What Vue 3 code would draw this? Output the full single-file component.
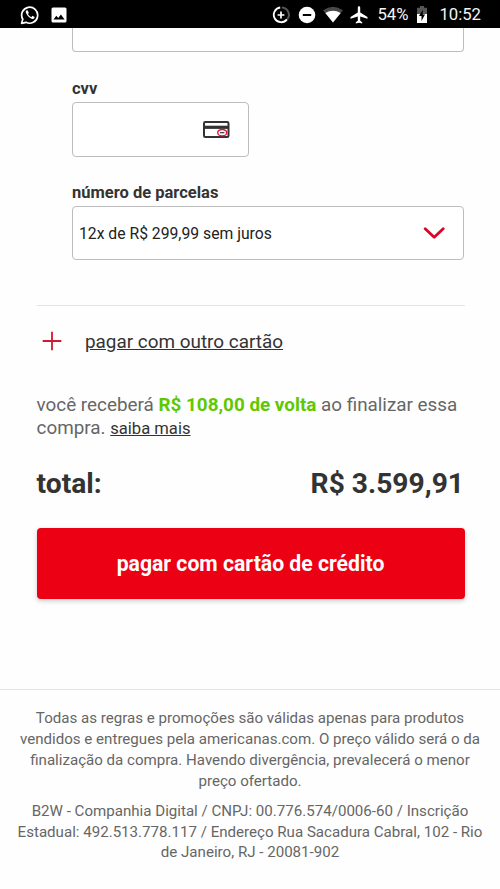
<script setup>
import { ref } from 'vue'

const installments = ref('12x de R$ 299,99 sem juros')
const total = ref('R$ 3.599,91')
const rules = [
  'Todas as regras e promoções são válidas apenas para produtos',
  'vendidos e entregues pela americanas.com. O preço válido será o da',
  'finalização da compra. Havendo divergência, prevalecerá o menor',
  'preço ofertado.'
]
const company = [
  'B2W - Companhia Digital / CNPJ: 00.776.574/0006-60 / Inscrição',
  'Estadual: 492.513.778.117 / Endereço Rua Sacadura Cabral, 102 - Rio',
  'de Janeiro, RJ - 20081-902'
]
</script>

<template>
  <div class="screen">
    <header class="status">
      <svg class="whatsapp" width="20" height="20" viewBox="0 0 20 20">
        <path d="M2.8 14.3A8 8 0 1 1 6 17.3L1.6 18.3Z" fill="none" stroke="#fff" stroke-width="1.7" stroke-linejoin="round" />
        <path d="M6.6 5.3C5.7 5.8 5.5 7 6.1 8.2C7.3 10.8 9 12.6 11.6 13.8C13 14.4 14.3 13.8 14.6 12.5L14.6 11.9L12.4 10.8L11.2 12.2C9.7 11.5 8.7 10.6 8 9.1L8.8 7.9L7.8 5.4Z" fill="#fff" />
      </svg>
      <svg class="picture" width="16" height="16" viewBox="0 0 16 16">
        <rect x=".5" y=".5" width="15" height="15" rx="1.5" fill="#fff" />
        <path d="M2.5 12.5L5.3 8.8L7.2 11.1L9.9 7.6L13.6 12.5Z" fill="#000" />
      </svg>
      <span class="spacer"></span>
      <svg class="saver" width="18" height="18" viewBox="0 0 18 18" fill="none">
        <path d="M9.8 1.4A7.4 7.4 0 0 1 15.4 13.2" stroke="#555" stroke-width="2" />
        <path d="M8.2 1.5A7.4 7.4 0 1 0 15 13.4" stroke="#fff" stroke-width="1.8" />
        <path d="M9 5.6V12.4M5.6 9H12.4" stroke="#fff" stroke-width="1.7" />
      </svg>
      <svg class="dnd" width="18" height="18" viewBox="0 0 18 18">
        <circle cx="9" cy="9" r="8.3" fill="#fff" /><path d="M4.8 9H13.2" stroke="#000" stroke-width="2" />
      </svg>
      <svg class="wifi" width="20" height="17" viewBox="0 0 20 17">
        <path d="M0 4.3Q10-3 20 4.3L10 16.5Z" fill="#484848" />
        <path d="M2.3 7Q10 2.4 17.7 7L10 16.5Z" fill="#fff" />
      </svg>
      <svg class="plane" width="18" height="18" viewBox="0 0 18 18">
        <path d="M9 .3C9.9.3 10.2 1 10.2 1.8V6.5L17.5 11V12.8L10.2 10.5V14.7L12.2 16.2V17.6L9 16.7L5.8 17.6V16.2L7.8 14.7V10.5L.5 12.8V11L7.8 6.5V1.8C7.8 1 8.1.3 9 .3Z" fill="#fff" />
      </svg>
      <span class="percent">54%</span>
      <svg class="battery" width="10" height="17" viewBox="0 0 10 17">
        <path d="M0 1.7H3V0H7V1.7H10V8H0Z" fill="#555" />
        <path d="M0 8H10V17H0Z" fill="#fff" />
        <path d="M5.8 3.8L2 10H4.5V15L8 8.5H5.8Z" fill="#000" />
      </svg>
      <span class="clock">10:52</span>
    </header>

    <main class="checkout">
      <form class="card-form" @submit.prevent>
        <div class="field cut"></div>
        <label class="label cvv-label">cvv</label>
        <div class="field cvv">
          <svg width="27" height="18" viewBox="0 0 27 18" fill="none">
            <rect x="1" y="1" width="24.5" height="15" rx="1.3" stroke="#333" stroke-width="2" />
            <path d="M1 6.3H25.5" stroke="#333" stroke-width="3.2" />
            <ellipse cx="19.2" cy="11.7" rx="4.5" ry="3.2" fill="#fff" stroke="#df1238" stroke-width="1.4" />
            <path d="M17 11.7H21.4" stroke="#333" stroke-width="1.2" />
          </svg>
        </div>
        <label class="label parcel-label">número de parcelas</label>
        <div class="field select">
          <span>{{ installments }}</span>
          <svg width="22" height="14" viewBox="0 0 22 14" fill="none">
            <path d="M2.2 2.7L11.2 11.2L20.2 2.7" stroke="#dc0528" stroke-width="2.8" stroke-linecap="round" stroke-linejoin="round" />
          </svg>
        </div>
      </form>

      <div class="other-card">
        <svg width="20" height="20" viewBox="0 0 20 20"><path d="M10 .7V19.3M.7 10H19.3" stroke="#cf1832" stroke-width="1.8" /></svg>
        <a>pagar com outro cartão</a>
      </div>

      <p class="cashback">
        <span class="first">você receberá <b>R$ 108,00 de volta</b> ao finalizar essa</span><br>
        <span>compra. <a>saiba mais</a></span>
      </p>
      <div class="total"><span class="total-label">total:</span><span>{{ total }}</span></div>
      <button class="pay">pagar com cartão de crédito</button>
    </main>

    <footer class="legal">
      <p><span v-for="line in rules" :key="line">{{ line }}</span></p>
      <p><span v-for="line in company" :key="line">{{ line }}</span></p>
    </footer>
  </div>
</template>

<style>
body { margin: 0; background: #fff; }
</style>

<style scoped>
.screen { width: 500px; height: 889px; overflow: hidden; background: #fefefe; font-family: Roboto, sans-serif; color: #333; box-sizing: border-box; }
svg { display: block; flex: none; }
.status { display: flex; align-items: center; height: 28px; padding: 1px 19px 0 20px; box-sizing: border-box; background: #000; color: #f4f4f4; font-size: 16.7px; }
.spacer { flex: 1; }
.picture { margin-left: 11px; }
.dnd { margin-left: 8px; }
.wifi { margin-left: 7px; }
.plane { margin-left: 7px; }
.percent { margin-left: 9px; }
.battery { margin-left: 9px; }
.clock { margin-left: 12px; }
.checkout { padding: 0 35.5px 0 36.6px; }
.card-form { display: flex; flex-direction: column; height: 277px; padding-left: 35.4px; border-bottom: 1px solid #e4e4e4; }
.field { box-sizing: border-box; border: 1px solid #bdbdbd; border-radius: 4px; display: flex; align-items: center; background: #fff; width: 392.4px; }
.cut { height: 24px; border-top: 0; border-radius: 0 0 4px 4px; }
.label { font-size: 16.5px; font-weight: 700; line-height: 22px; }
.cvv-label { margin-top: 26px; }
.cvv { width: 177px; height: 55px; margin-top: 2px; justify-content: flex-end; padding: 0 18px 0 0; }
.parcel-label { margin-top: 25px; }
.select { height: 54px; margin-top: 2px; justify-content: space-between; padding: 0 18px 0 6px; font-size: 15.72px; color: #222; }
.other-card { display: flex; align-items: center; height: 70px; padding-left: 5.4px; gap: 23px; font-size: 18.9px; }
a { text-decoration: underline; color: #333; }
.cashback { margin: 18px 0 0; font-size: 18.85px; line-height: 22.5px; color: #666; white-space: nowrap; }
.cashback b { color: #5fc800; }
.cashback a { font-size: 16.6px; }
.total { display: flex; justify-content: space-between; margin-top: 26px; height: 36px; line-height: 36px; font-size: 28.2px; font-weight: 700; padding-right: .5px; }
.pay { display: block; width: 100%; height: 71px; margin-top: 26px; padding: 0 0 1px; border: 0; border-radius: 4px; background: #ec0013; color: #fff; font: 700 21.2px Roboto, sans-serif; box-shadow: 0 2px 5px #0003; }
.legal { margin-top: 90px; padding-top: 18px; border-top: 1px solid #e4e4e4; text-align: center; font-size: 15.1px; line-height: 20.9px; color: #666; white-space: nowrap; }
.legal p { margin: 0 0 9px; }
.legal span { display: block; }
</style>
